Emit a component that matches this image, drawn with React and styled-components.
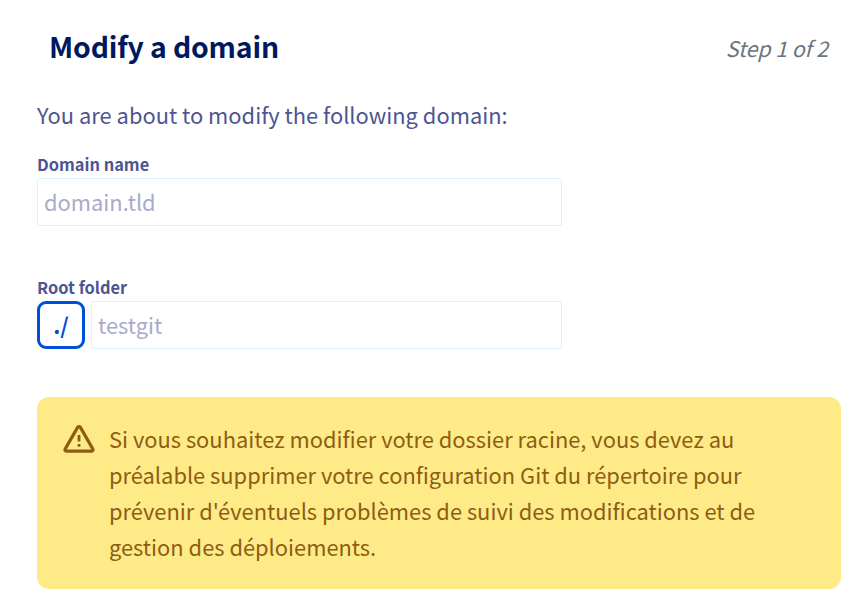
import React from 'react';
import styled, { createGlobalStyle } from 'styled-components';

const GlobalStyle = createGlobalStyle`
  * { box-sizing: border-box; }
  body {
    margin: 0;
    background: #fff;
    color: #4d5592;
    font-family: "Source Sans Pro", "Noto Sans CJK SC", "Open Sans", sans-serif;
    font-size: 21.86px;
    line-height: 36px;
  }
`;

const Page = styled.main`
  display: flex;
  flex-direction: column;
  min-height: 601px;
  padding: 28px 18px 12px 37px;
`;

const Header = styled.header`
  display: flex;
  justify-content: space-between;
  height: 36px;
  padding: 0 13px 0 12px;
`;

const Title = styled.h1`
  margin: 0;
  color: #00185e;
  font-size: 28.4px;
  font-weight: 600;
  letter-spacing: -0.17px;
  line-height: 36px;
  white-space: nowrap;
`;

const Step = styled.span`
  padding-top: 2px;
  color: #6c757d;
  font-size: 21.4px;
  font-style: italic;
  letter-spacing: -0.08px;
  white-space: nowrap;
`;

const Intro = styled.p`
  margin: 33px 0 20px;
  white-space: nowrap;
`;

const Field = styled.div`
  display: flex;
  flex-direction: column;
  width: 525px;
  margin-bottom: ${({ $gap }) => $gap}px;
`;

const Label = styled.label`
  height: 25px;
  font-size: 16.4px;
  font-weight: 700;
  line-height: 22px;
`;

const InputGroup = styled.div`
  display: flex;
  gap: 6px;
`;

const Prefix = styled.span`
  display: flex;
  flex: 0 0 48px;
  height: 48px;
  align-items: center;
  justify-content: center;
  padding-bottom: 1px;
  border: 3px solid #0050d7;
  border-radius: 9px;
  color: #0050d7;
  font-weight: 600;
`;

const Input = styled.input`
  flex: 1;
  min-width: 0;
  height: 48px;
  padding: 0 6px 2px;
  border: 1px solid #d9f6fd;
  border-radius: 3px 3px 1px 1px;
  background: #fff;
  color: #a9abcb;
  font: inherit;
  outline: none;
`;

const Warning = styled.section`
  display: flex;
  gap: 14px;
  height: 192px;
  padding: 24px 26px;
  border-radius: 12px;
  background: #ffea88;
  color: #8d5e12;
`;

const WarningIcon = styled.svg`
  flex: 0 0 32px;
  width: 32px;
  height: 36px;
`;

const WarningText = styled.p`
  margin: 0;
  white-space: nowrap;
`;

const warningLines = [
  'Si vous souhaitez modifier votre dossier racine, vous devez au',
  'préalable supprimer votre configuration Git du répertoire pour',
  "prévenir d'éventuels problèmes de suivi des modifications et de",
  'gestion des déploiements.',
];

export default function App() {
  return (
    <>
      <GlobalStyle />
      <Page>
        <Header>
          <Title>Modify a domain</Title>
          <Step>Step 1 of 2</Step>
        </Header>
        <Intro>You are about to modify the following domain:</Intro>
        <Field $gap={50}>
          <Label htmlFor="domain">Domain name</Label>
          <InputGroup>
            <Input id="domain" defaultValue="domain.tld" readOnly />
          </InputGroup>
        </Field>
        <Field $gap={48}>
          <Label htmlFor="folder">Root folder</Label>
          <InputGroup>
            <Prefix>./</Prefix>
            <Input id="folder" defaultValue="testgit" readOnly />
          </InputGroup>
        </Field>
        <Warning>
          <WarningIcon viewBox="0 0 32 36" fill="none">
            <path
              d="M14.6 6.4Q16 4.8 17.4 6.4L29.6 27.6Q30.8 29.9 28.8 30.1H3.2Q1.2 29.9 2.4 27.6Z"
              stroke="currentColor"
              strokeWidth="3.2"
              strokeLinejoin="round"
            />
            <path d="M16 14v6.5M16 23v2.8" stroke="currentColor" strokeWidth="2.8" />
          </WarningIcon>
          <WarningText>
            {warningLines.map((line) => (
              <React.Fragment key={line}>
                {line}
                <br />
              </React.Fragment>
            ))}
          </WarningText>
        </Warning>
      </Page>
    </>
  );
}
